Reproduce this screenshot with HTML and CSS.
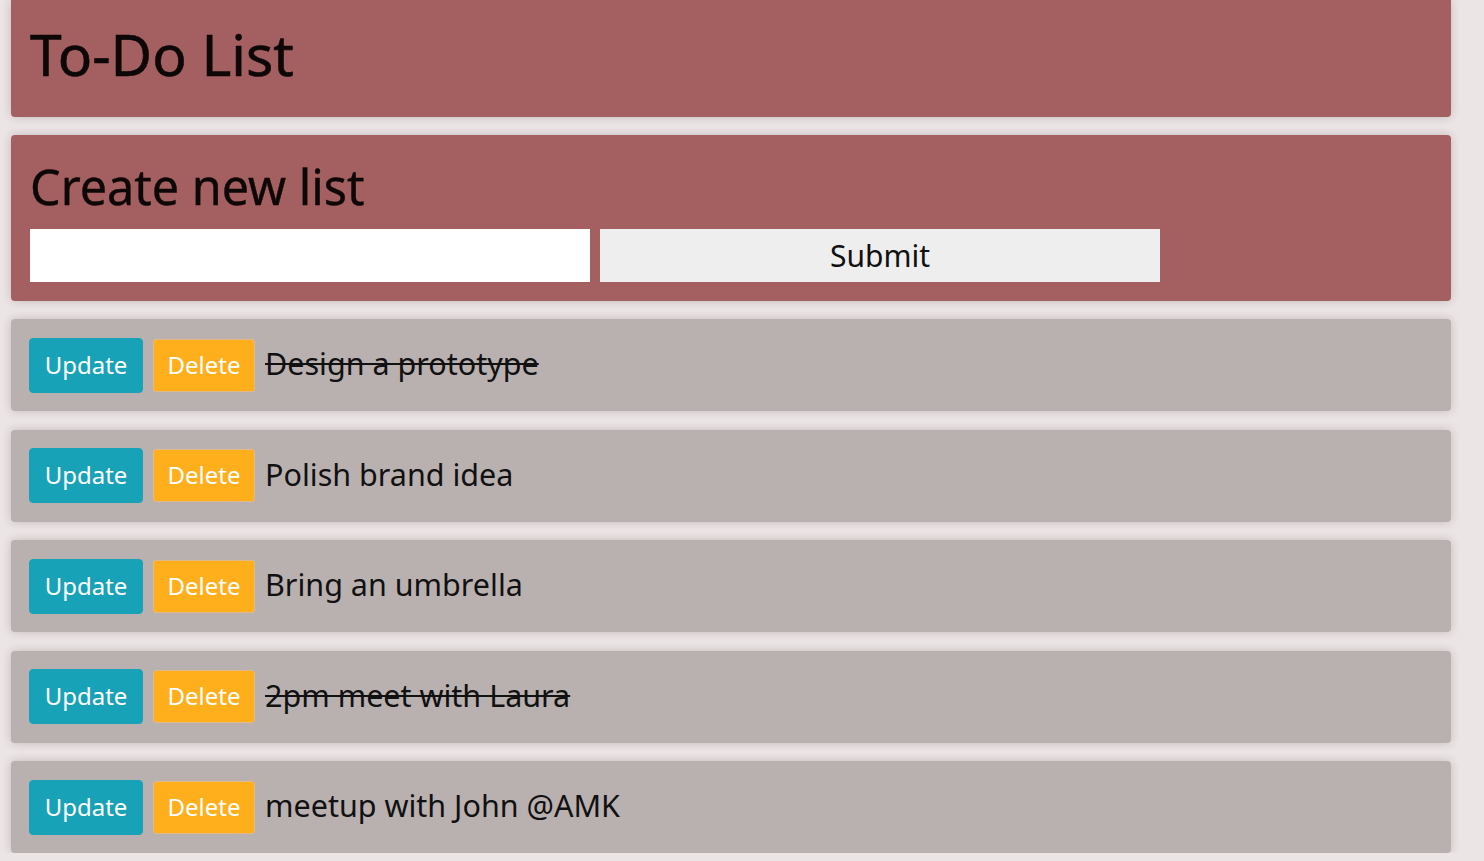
FILE: index.html
```html
<!DOCTYPE html>
<html lang="en">
<head>
<meta charset="utf-8">
<title>To-Do List</title>
<link rel="stylesheet" href="styles.css">
</head>
<body>
<main class="page">
  <header class="card card-header">
    <h1 class="title">To-Do List</h1>
  </header>
  <section class="card card-form">
    <h2 class="subtitle">Create new list</h2>
    <form class="form">
      <input class="text-input" type="text">
      <button class="submit" type="button">Submit</button>
    </form>
  </section>
  <ul class="list">
    <li class="card item">
      <button class="btn btn-update" type="button">Update</button>
      <button class="btn btn-delete" type="button">Delete</button>
      <span class="item-text done">Design a prototype</span>
    </li>
    <li class="card item">
      <button class="btn btn-update" type="button">Update</button>
      <button class="btn btn-delete" type="button">Delete</button>
      <span class="item-text">Polish brand idea</span>
    </li>
    <li class="card item">
      <button class="btn btn-update" type="button">Update</button>
      <button class="btn btn-delete" type="button">Delete</button>
      <span class="item-text">Bring an umbrella</span>
    </li>
    <li class="card item">
      <button class="btn btn-update" type="button">Update</button>
      <button class="btn btn-delete" type="button">Delete</button>
      <span class="item-text done">2pm meet with Laura</span>
    </li>
    <li class="card item">
      <button class="btn btn-update" type="button">Update</button>
      <button class="btn btn-delete" type="button">Delete</button>
      <span class="item-text">meetup with John @AMK</span>
    </li>
  </ul>
</main>
</body>
</html>
```

FILE: styles.css
```css
* { box-sizing: border-box; }

html, body {
  margin: 0;
  padding: 0;
  background: #ece5e5;
  font-family: "Noto Sans", "Open Sans", sans-serif;
  color: #111;
}

.page {
  width: 1440px;
  margin-left: 11px;
  display: flex;
  flex-direction: column;
  gap: 18px;
}

.card {
  border-radius: 4px;
  box-shadow: 0 0 10px rgba(60, 30, 30, 0.22);
}

.card-header {
  background: #a46060;
  height: 117px;
  border-radius: 0 0 4px 4px;
  padding: 18px 19px 0;
}

.title {
  margin: 0;
  font-size: 57px;
  font-weight: 400;
  line-height: 72px;
  color: #0d0707;
  -webkit-text-stroke: 0.6px #0d0707;
}

.card-form {
  background: #a46060;
  height: 166px;
  padding: 18px 19px 0;
}

.subtitle {
  margin: 0;
  font-size: 48.5px;
  font-weight: 400;
  line-height: 66px;
  color: #0d0707;
  -webkit-text-stroke: 0.4px #0d0707;
}

.form {
  display: flex;
  gap: 10px;
  margin-top: 10px;
}

.text-input {
  width: 560px;
  height: 53px;
  border: none;
  background: #fff;
  margin: 0;
  font-family: inherit;
  font-size: 28px;
}

.submit {
  width: 560px;
  height: 53px;
  border: none;
  background: #eeeeee;
  margin: 0;
  font-family: inherit;
  font-size: 30px;
  color: #111;
  padding: 0;
}

.list {
  list-style: none;
  margin: 0;
  padding: 0;
  display: flex;
  flex-direction: column;
  gap: 18.5px;
}

.item {
  background: #b9b0b0;
  height: 92px;
  padding: 0 18px;
  display: flex;
  align-items: center;
  gap: 10px;
}

.btn {
  height: 55px;
  margin: 0;
  border-radius: 4px;
  font-family: inherit;
  font-size: 24px;
  color: #fff;
  padding: 0 0 2px;
}

.btn-update {
  width: 114px;
  background: #17a2b8;
  border: 1px solid #17a2b8;
}

.btn-delete {
  width: 102px;
  height: 53px;
  background: #ffae1c;
  border: 1px solid #e2b98a;
  border-radius: 3px;
}

.item-text {
  font-size: 30.5px;
  margin-top: -4px;
}

.done {
  text-decoration: line-through;
  text-decoration-thickness: 2px;
}
```
